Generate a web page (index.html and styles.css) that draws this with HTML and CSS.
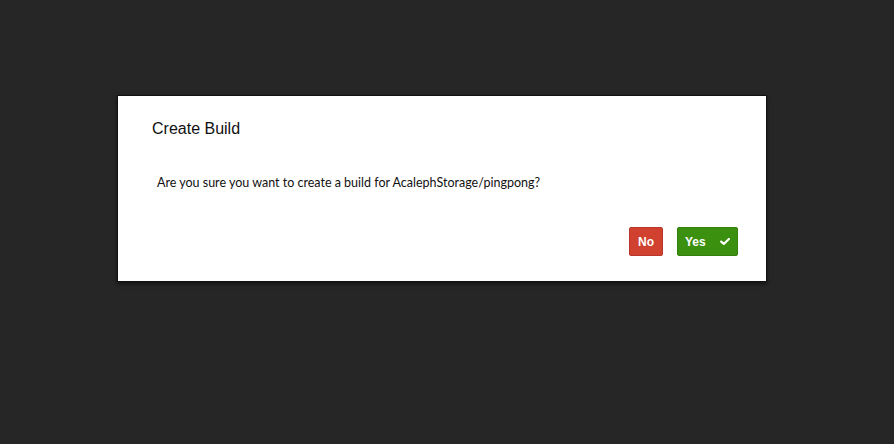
FILE: index.html
```html
<!DOCTYPE html>
<html>
<head>
<meta charset="utf-8">
<link rel="stylesheet" href="styles.css">
</head>
<body>
<div class="backdrop">
  <div class="modal">
    <h3 class="modal-title">Create Build</h3>
    <p class="modal-body">Are you sure you want to create a build for AcalephStorage/pingpong?</p>
    <div class="modal-actions">
      <button class="btn btn-no">No</button>
      <button class="btn btn-yes">Yes
        <svg class="check" viewBox="0 0 10 7" width="10" height="7"><path d="M1.2 3.6 L3.8 6 L8.9 1" fill="none" stroke="#fff" stroke-width="2.2" stroke-linecap="round" stroke-linejoin="round"/></svg>
      </button>
    </div>
  </div>
</div>
</body>
</html>
```
FILE: styles.css
```css
html, body {
  margin: 0;
  padding: 0;
  background: #262626;
  width: 894px;
  height: 444px;
  overflow: hidden;
}
.backdrop {
  padding: 95px 0 0 117px;
}
.modal {
  box-sizing: border-box;
  width: 650px;
  height: 187px;
  background: #fff;
  border: 1px solid #111;
  box-shadow: 0 2px 4px rgba(0,0,0,0.5);
  padding: 0 28px 0 34px;
  display: flex;
  flex-direction: column;
}
.modal-title {
  margin: 23px 0 0 0;
  font-family: "Liberation Sans", Arial, sans-serif;
  font-weight: normal;
  font-size: 16px;
  line-height: 20px;
  color: #111;
}
.modal-body {
  margin: 35px 0 0 5px;
  font-family: Lato, sans-serif;
  font-size: 12.5px;
  line-height: 18px;
  color: #111;
}
.modal-actions {
  margin-top: 35px;
  display: flex;
  justify-content: flex-end;
  gap: 14px;
}
.btn {
  box-sizing: border-box;
  height: 29px;
  border-radius: 2px;
  font-family: "Liberation Sans", Arial, sans-serif;
  font-weight: bold;
  font-size: 12px;
  color: #fff;
  padding: 0;
  display: flex;
  align-items: center;
  cursor: pointer;
}
.btn-no {
  width: 34px;
  justify-content: center;
  background: #d0412f;
  border: 1px solid #b8362a;
}
.btn-yes {
  width: 61px;
  justify-content: space-between;
  padding: 0 7px 0 7px;
  background: #3b9010;
  border: 1px solid #33800c;
}
.check {
  display: block;
}
```
